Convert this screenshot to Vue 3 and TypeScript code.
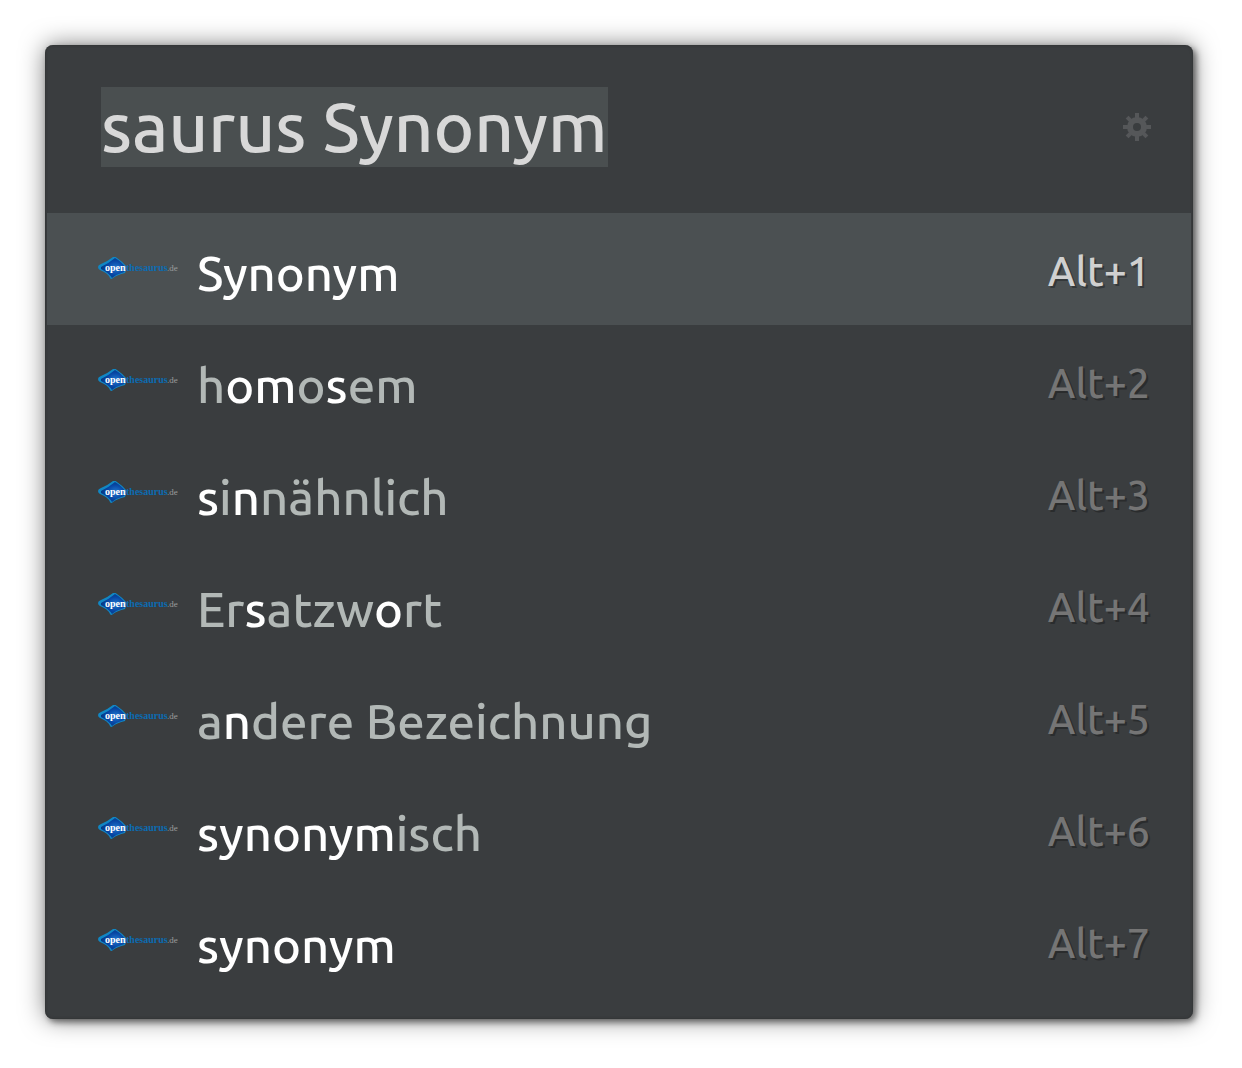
<script setup lang="ts">
import { nextTick, onMounted, ref } from 'vue'

interface Segment {
  text: string
  hit: boolean
}

interface Result {
  segments: Segment[]
  shortcut: string
}

// Letters wrapped in square brackets are the ones matched by the query.
function parse(source: string): Segment[] {
  return source
    .split(/[[\]]/)
    .map((text, i) => ({ text, hit: i % 2 === 1 }))
    .filter((segment) => segment.text.length > 0)
}

const results: Result[] = [
  '[Synonym]',
  'h[om]o[s]em',
  '[s]i[n]nähnlich',
  'Er[s]atzw[o]rt',
  'a[n]dere Bezeichnung',
  '[synonym]isch',
  '[synonym]',
].map((source, i) => ({ segments: parse(source), shortcut: `Alt+${i + 1}` }))

const query = ref('saurus Synonym')
const active = ref(0)
const field = ref<HTMLInputElement | null>(null)

onMounted(async () => {
  await nextTick()
  field.value?.focus()
  field.value?.select()
})
</script>

<template>
  <main class="launcher">
    <header class="search">
      <input ref="field" v-model="query" class="query" type="text" aria-label="Query" spellcheck="false" />
      <button class="settings" type="button" aria-label="Preferences">
        <svg width="28" height="28" viewBox="0 0 28 28" aria-hidden="true">
          <g fill="#555759">
            <rect v-for="a in [0, 45, 90, 135]" :key="a" x="12" y="0" width="4" height="28"
              :transform="`rotate(${a} 14 14)`" />
            <circle cx="14" cy="14" r="10" />
          </g>
          <circle cx="14" cy="14" r="4" fill="#3a3d3f" />
        </svg>
      </button>
    </header>
    <ul class="results">
      <li v-for="(result, i) in results" :key="i">
        <button class="row" :class="{ active: i === active }" type="button" @click="active = i">
          <svg class="logo" width="80" height="24" viewBox="0 0 80 24" aria-hidden="true">
            <defs>
              <radialGradient :id="`gem-${i}`" cx="0.6" cy="0.5" r="0.6">
                <stop offset="0" stop-color="#1f78d0" />
                <stop offset="0.6" stop-color="#0745a3" />
                <stop offset="1" stop-color="#06377f" />
              </radialGradient>
            </defs>
            <path d="M0 10 Q0 8 3 7 Q10 4 15 0 Q17 -1 19 1 Q25 5 28 9 Q29 11 27 16 Q19 18 15 21 Q13 23 12 21 Q10 16 2 13 Q0 12 0 10Z" fill="#1187c4" />
            <path d="M3 10 Q11 6 17 1 Q24 5 27 10 Q28 13 26 15 Q19 17 14 21 Q11 16 3 12Z" :fill="`url(#gem-${i})`" />
            <text x="7" y="14" class="open">open</text>
            <text x="28" y="14" class="thesaurus">thesaurus</text>
            <text x="69" y="14" class="tld">.de</text>
          </svg>
          <span class="label"><span v-for="(segment, s) in result.segments" :key="s" :class="{ hit: segment.hit }">{{ segment.text }}</span></span>
          <span class="shortcut">{{ result.shortcut }}</span>
        </button>
      </li>
    </ul>
  </main>
</template>

<style>
body {
  background: #fff;
}
</style>

<style scoped>
.launcher {
  margin: 45px 49px 45px 45px;
  padding-bottom: 22px;
  border-radius: 8px;
  background: #3a3d3f;
  box-shadow:
    inset 0 0 3px #2c2e2f,
    3px 3px 6px rgba(0, 0, 0, 0.5),
    0 0 24px rgba(0, 0, 0, 0.5);
}

.search {
  display: flex;
  align-items: center;
  gap: 24px;
  padding: 42px 42px 46px 56px;
}

.query {
  flex: 1;
  min-width: 0;
  height: 80px;
  padding: 0;
  border: 0;
  outline: 0;
  background: transparent;
  color: #d8d8d8;
  caret-color: transparent;
  font: 500 69px/80px Ubuntu, "Noto Sans", sans-serif;
}

.query::selection {
  background: #4a4f50;
  color: #d8d8d8;
}

.settings {
  display: flex;
  padding: 0;
  border: 0;
  background: none;
  cursor: pointer;
}

.results {
  margin: 0;
  padding: 0 2px;
  list-style: none;
}

.row {
  display: flex;
  align-items: center;
  width: 100%;
  height: 112px;
  padding: 0 41px 0 51px;
  border: 0;
  background: none;
  color: #b2b8b6;
  font: 500 49px/64px Ubuntu, "Noto Sans", sans-serif;
  text-align: left;
  cursor: pointer;
}

.row.active {
  background: #4b5052;
}

.logo {
  flex: none;
}

.label {
  flex: 1;
  padding: 8px 0 0 19px;
  white-space: nowrap;
}

.hit {
  color: #fff;
}

.shortcut {
  padding-top: 4px;
  color: #757575;
  font-size: 41px;
  text-shadow: 2px 2px 0 #2a2c2d;
}

.active .shortcut {
  color: #d0d0d0;
  text-shadow: 2px 2px 0 #34383a;
}

.open,
.thesaurus {
  font: bold 10px "Liberation Serif", serif;
}

.open {
  fill: #fff;
}

.thesaurus {
  fill: #0b6cb2;
}

.tld {
  font: 9px "Liberation Serif", serif;
  fill: #9a9c9d;
}
</style>
